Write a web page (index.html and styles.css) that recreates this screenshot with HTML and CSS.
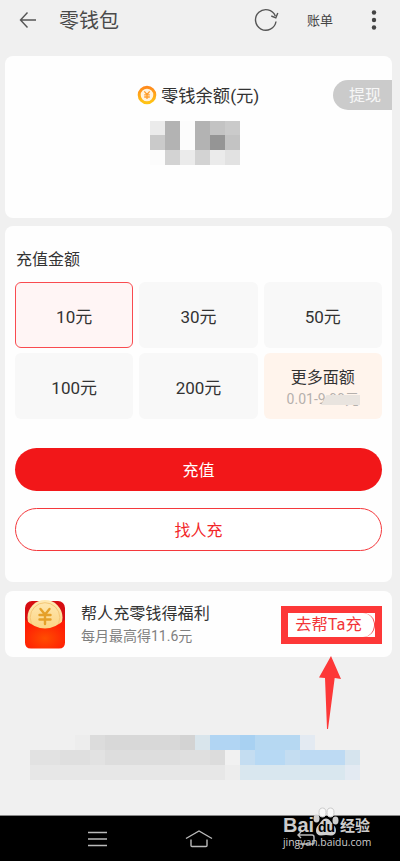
FILE: index.html
```html
<!DOCTYPE html>
<html lang="zh-CN">

<head>
    <meta charset="utf-8">
    <title>零钱包</title>
    <link rel="stylesheet" href="styles.css">
</head>

<body>
    <!-- top bar -->
    <header class="topbar">
        <svg class="back" width="18" height="18" viewBox="0 0 18 18">
            <path d="M8.5 1.5L1.5 9l7 7.5M1.5 9H17" />
        </svg>
        <h1>零钱包</h1>
        <svg class="refresh" width="26" height="26" viewBox="0 0 26 26">
            <path d="M23 14.5A10.3 10.3 0 1 1 22.3 8.9M18.3 9l4.500 1.800L24.800 6" />
        </svg>
        <span class="bill">账单</span>
        <svg class="more" width="6" height="20" viewBox="0 0 6 20">
            <circle cx="3" cy="2.5" r="2.2" />
            <circle cx="3" cy="10" r="2.2" />
            <circle cx="3" cy="17.5" r="2.2" />
        </svg>
    </header>

    <main>
        <!-- balance -->
        <section class="card balance">
            <div class="balance-title">
                <svg width="20" height="20" viewBox="0 0 20 20">
                    <defs>
                        <linearGradient id="ring" x1="0" y1="0" x2="0" y2="1">
                            <stop offset="0" stop-color="#ff8a1c" />
                            <stop offset="1" stop-color="#ffc414" />
                        </linearGradient>
                    </defs>
                    <circle cx="10" cy="10" r="7.8" fill="#fff3df" stroke="url(#ring)" stroke-width="3" />
                    <path d="M7.3 6.4L10 9.5l2.7-3.1M10 9.5V14M7.2 9.8h5.6M7.2 12h5.6" fill="none" stroke="#ff9d2c" stroke-width="1.3" />
                </svg>
                <span>零钱余额(元)</span>
            </div>
            <button class="withdraw">提现</button>
            <svg class="amount" width="90" height="44" viewBox="0 0 90 44" shape-rendering="crispEdges">
                <path fill="#ebebeb" d="M0 0h15v14H0zM30 29h15v15H30zM60 29h15v15H60z" />
                <path fill="#b3b3b3" d="M15 0h15v29H15zM45 0h15v29H45z" />
                <path fill="#fcfcfc" d="M30 0h15v29H30zM0 29h15v15H0z" />
                <path fill="#c3c3c3" d="M60 0h15v14H60zM75 14h15v15H75z" />
                <path fill="#cacaca" d="M75 0h15v14H75zM0 14h15v15H0z" />
                <path fill="#959595" d="M60 14h15v15H60z" />
                <path fill="#d3d3d3" d="M15 29h15v15H15zM45 29h15v15H45z" />
                <path fill="#e2e2e2" d="M75 29h15v15H75z" />
            </svg>
        </section>

        <!-- top up -->
        <section class="card recharge">
            <h2>充值金额</h2>
            <div class="options">
                <div class="option selected">10元</div>
                <div class="option">30元</div>
                <div class="option">50元</div>
                <div class="option">100元</div>
                <div class="option">200元</div>
                <div class="option custom">
                    <span>更多面额</span>
                    <small>0.01-9.99元<i class="smudge"></i></small>
                </div>
            </div>
            <button class="btn primary">充值</button>
            <button class="btn outline">找人充</button>
        </section>

        <!-- help a friend -->
        <section class="card promo">
            <svg class="packet" width="46" height="52" viewBox="0 0 46 52">
                <defs>
                    <radialGradient id="red" cx=".5" cy=".65" r=".6">
                        <stop offset="0" stop-color="#ff4d00" />
                        <stop offset="1" stop-color="#ff1d05" />
                    </radialGradient>
                    <linearGradient id="gold" x1="0" y1="0" x2="0" y2="1">
                        <stop offset="0" stop-color="#ffe9b4" />
                        <stop offset="1" stop-color="#fbcf78" />
                    </linearGradient>
                </defs>
                <rect x="3" y="2" width="40" height="40" rx="7" fill="#d60d12" />
                <circle cx="23" cy="18.5" r="17.5" fill="url(#gold)" />
                <circle cx="23" cy="18.500" r="14.800" fill="none" stroke="#f4c777" />
                <path d="M3 20.500Q23 38.500 43 20.500V43.500q0 6-6 6H9q-6 0-6-6z" fill="url(#red)" />
                <path d="M18.500 10l4.500 5.500 4.500-5.500M23 15.500V25M17.500 16h11M17.500 20.500h11" fill="none" stroke="#e5a02a" stroke-width="2.4" stroke-linecap="round" />
            </svg>
            <div class="promo-text">
                <h3>帮人充零钱得福利</h3>
                <p>每月最高得11.6元</p>
            </div>
            <div class="marked">
                <button class="help">去帮Ta充</button>
                <svg class="arrow" width="22" height="73" viewBox="0 0 22 73">
                    <path d="M12 0L22 23l-6.3-1L9 73H8L6 22l-6-.5z" fill="#fd3838" />
                </svg>
            </div>
        </section>

        <svg class="notice" width="345" height="50" viewBox="0 0 345 50" shape-rendering="crispEdges">
            <path fill="#ededed" d="M45 5h15v15H45zM195 35h15v15H195z" />
            <path fill="#dcdcdc" d="M60 5h15v15H60zM180 20h15v15H180z" />
            <path fill="#d8d8d8" d="M75 5h75v15H75zM150 5h15v15H150z" />
            <path fill="#d3d3d3" d="M150 5h15v15H150z" />
            <path fill="#d9e5ec" d="M165 5h15v15H165z" />
            <path fill="#b1d5f3" d="M180 5h30v15H180z" />
            <path fill="#a8d1f2" d="M210 5h15v15H210z" />
            <path fill="#b6d8f2" d="M225 5h45v15H225z" />
            <path fill="#e3eaf2" d="M270 5h15v15H270zM315 35h15v15H315z" />
            <path fill="#e2e2e2" d="M0 20h30v15H0zM60 20h15v15H60z" />
            <path fill="#dfdfdf" d="M30 20h30v15H30zM150 20h30v15H150z" />
            <path fill="#dddddd" d="M75 20h75v15H75z" />
            <path fill="#f1f1f1" d="M195 20h15v15H195z" />
            <path fill="#c4ddf1" d="M210 20h15v15H210zM255 20h15v15H255z" />
            <path fill="#b7d9f4" d="M225 20h30v15H225z" />
            <path fill="#bddaf3" d="M270 20h45v15H270z" />
            <path fill="#d6e4ee" d="M315 20h15v15H315z" />
            <path fill="#e7e7e7" d="M0 35h195v15H0z" />
            <path fill="#d9e7ef" d="M210 35h105v15H210z" />
        </svg>
    </main>

    <!-- system navigation -->
    <nav class="navbar">
        <svg class="nav-menu" width="20" height="16" viewBox="0 0 20 16">
            <path d="M0 1.5h19M0 8h19M0 14.5h19" />
        </svg>
        <svg class="nav-home" width="28" height="18" viewBox="0 0 28 18">
            <path d="M1 8.5L14 1l13 7.5M6 9.5v6q0 1 1 1h14q1 0 1-1v-6" />
        </svg>
        <svg class="nav-back" width="20" height="15" viewBox="0 0 20 15">
            <path d="M4 1L1 4l3 3M1 4h14q2 0 2 2v6q0 1-1 1H1" />
        </svg>
        <div class="watermark">
            <div class="brand">
                <span class="bai">Bai</span>
                <span class="paw">
                    <svg width="26" height="29" viewBox="0 0 26 29">
                        <ellipse cx="3.500" cy="11.500" rx="3" ry="4" />
                        <ellipse cx="9.500" cy="5.500" rx="3.500" ry="4.500" class="toe" />
                        <ellipse cx="17.500" cy="5.500" rx="3.500" ry="4.500" class="toe" />
                        <ellipse cx="22.500" cy="13.500" rx="3" ry="4" />
                        <path d="M13 11.500c4 0 5 4 8 7s3 10-3 10q-5-1-10 0c-6 0-6-7-3-10s4-7 8-7z" />
                    </svg>
                    <b>du</b>
                </span>
                <span class="cn">经验</span>
            </div>
            <div class="site">jingyan.baidu.com</div>
        </div>
    </nav>
</body>

</html>
```
FILE: styles.css
```css
* {
    box-sizing: border-box;
}

body {
    margin: 0;
    height: 861px;
    display: flex;
    flex-direction: column;
    overflow: hidden;
    background: #f0f0f0;
    color: #333;
    font-family: Roboto, "Noto Sans CJK SC", sans-serif;
}

h1, h2, h3, p {
    margin: 0;
    font-weight: 400;
}

button {
    font-family: inherit;
    padding: 0;
    border: none;
}

/* top bar */
.topbar {
    height: 56px;
    padding: 0 23px 16px 19px;
    display: flex;
    align-items: center;
}

.topbar path {
    fill: none;
    stroke: #555;
    stroke-width: 1.4;
}

.topbar h1 {
    margin: -2px 0 0 22px;
    font-size: 20px;
    color: #4a4a4a;
}

.refresh {
    margin-left: auto;
}

.bill {
    margin: -2px 38px 0 28px;
    font-size: 13px;
    color: #444;
}

.more {
    fill: #444;
}

main {
    flex: 1;
    padding: 0 8px 0 5px;
}

.card {
    background: #fefefe;
    border-radius: 8px;
}

/* balance */
.balance {
    height: 162px;
    margin-bottom: 8px;
    position: relative;
    padding-top: 26px;
}

.balance-title {
    display: flex;
    align-items: center;
    gap: 4px;
    height: 26px;
    padding-left: 132px;
    font-size: 17.3px;
}

.balance-title span {
    margin-top: -2px;
}

.withdraw {
    position: absolute;
    top: 24px;
    right: 0;
    width: 59px;
    height: 30px;
    padding: 0 0 2px 5px;
    border-radius: 15px 0 0 15px;
    background: #cbcbcb;
    color: #f7f7f7;
    font-size: 16px;
}

.amount {
    display: block;
    margin: 13px 0 0 145px;
}

/* top up */
.recharge {
    height: 356px;
    margin-bottom: 9px;
    padding: 21px 10px 0;
}

.recharge h2 {
    height: 35px;
    line-height: 26px;
    padding-left: 1px;
    font-size: 16px;
}

.options {
    display: grid;
    grid-template-columns: repeat(3, 1fr);
    grid-auto-rows: 66px;
    gap: 5px 6px;
    margin-bottom: 29px;
}

.option {
    display: flex;
    flex-direction: column;
    align-items: center;
    justify-content: center;
    border-radius: 6px;
    background: #f8f8f8;
    font-size: 17px;
}

.selected {
    border: 1px solid #f94b50;
    background: #fff5f5;
}

.custom {
    padding-top: 4px;
    background: #fff4ec;
    font-size: 16px;
    line-height: 22px;
}

.custom small {
    position: relative;
    font-size: 14px;
    line-height: 20px;
    color: #b5b0ac;
}

.smudge {
    position: absolute;
    right: -1px;
    top: 6px;
    width: 39px;
    height: 10px;
    background: #e9e4df;
    clip-path: polygon(14% 0, 100% 0, 100% 100%, 0 100%);
}

.btn {
    display: block;
    width: 100%;
    height: 43px;
    padding-bottom: 1px;
    border-radius: 22px;
    font-size: 16px;
}

.primary {
    margin-bottom: 17px;
    background: #f21719;
    color: #fff;
}

.outline {
    border: 1px solid #f4383c;
    background: #fff;
    color: #f22629;
}

/* help a friend */
.promo {
    height: 66px;
    display: flex;
    align-items: center;
    padding: 1px 10px 0 17px;
}

.promo-text {
    margin-left: 13px;
}

.promo h3 {
    font-size: 16.1px;
    line-height: 23px;
}

.promo p {
    font-size: 14px;
    line-height: 22px;
    color: #808080;
}

.marked {
    position: relative;
    margin-left: auto;
    width: 101px;
    height: 38px;
    border: 7px solid #fd3838;
    overflow: visible;
}

.help {
    display: block;
    width: 87px;
    height: 24px;
    padding-right: 5px;
    border-right: 1px solid #f54347;
    border-radius: 0 12px 12px 0;
    background: #fff;
    color: #f23639;
    font-size: 16.3px;
    line-height: 22px;
}

.arrow {
    position: absolute;
    left: 31px;
    top: 43px;
}

.notice {
    display: block;
    margin: 73px 0 0 25px;
}

/* system navigation */
.navbar {
    height: 46px;
    display: flex;
    align-items: center;
    position: relative;
    background: #000;
    border-top: 1px solid #888;
}

.navbar > svg {
    fill: none;
    stroke: #bbb;
    stroke-width: 1.4;
}

.nav-menu {
    margin-left: 88px;
}

.nav-home {
    margin-left: 77px;
}

.nav-back {
    margin-left: 84px;
}

/* watermark lies over the bar and the page */
.watermark {
    position: absolute;
    left: 283px;
    top: -9px;
    color: #ccc;
}

.brand {
    height: 29px;
    display: flex;
    align-items: flex-end;
    font: bold 20px/22px "Liberation Sans", sans-serif;
}

.bai {
    width: 30px;
}

.paw {
    position: relative;
    width: 26px;
    height: 29px;
}

.paw svg {
    display: block;
    fill: #d0d0d0;
}

.paw .toe {
    fill: #fafafa;
    stroke: #ccc;
}

.paw b {
    position: absolute;
    left: 5px;
    top: 13px;
    font-size: 14px;
    line-height: 14px;
    color: #000;
}

.cn {
    margin-left: 1px;
    font: bold 15px/22px "Noto Sans CJK SC", sans-serif;
}

.site {
    font: 10.4px/13px "Open Sans", sans-serif;
}
```
